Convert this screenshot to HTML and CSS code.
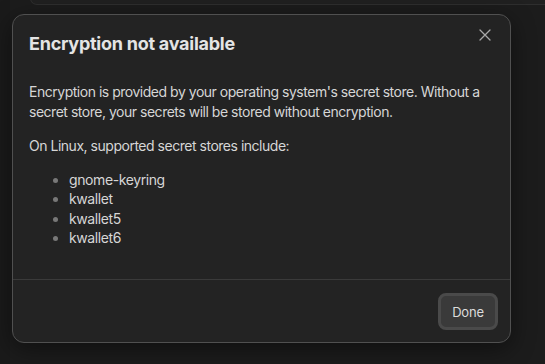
FILE: index.html
```html
<!DOCTYPE html>
<html>
<head>
<meta charset="utf-8">
<link rel="stylesheet" href="styles.css">
</head>
<body>
<div class="app">
  <div class="sidebar"></div>
  <div class="main">
    <div class="panel"></div>
  </div>
</div>
<div class="dialog" role="dialog">
  <button class="close" aria-label="Close">
    <svg width="12" height="12" viewBox="0 0 12 12"><path d="M1 1L11 11M11 1L1 11" stroke="#a9a9a9" stroke-width="1.3" fill="none" stroke-linecap="round"/></svg>
  </button>
  <div class="body">
    <h2 class="title">Encryption not available</h2>
    <p>Encryption is provided by your operating system's secret store. Without a secret store, your secrets will be stored without encryption.</p>
    <p>On Linux, supported secret stores include:</p>
    <ul>
      <li>gnome-keyring</li>
      <li>kwallet</li>
      <li>kwallet5</li>
      <li>kwallet6</li>
    </ul>
  </div>
  <div class="footer">
    <button class="done">Done</button>
  </div>
</div>
</body>
</html>
```
FILE: styles.css
```css
html, body {
  margin: 0;
  height: 100%;
  background: #1c1c1c;
  font-family: Inter, "Noto Sans", sans-serif;
  overflow: hidden;
}
.app {
  display: flex;
  height: 100%;
}
.sidebar {
  width: 10px;
  background: #1a1a1a;
}
.main {
  flex: 1;
  padding-left: 20px;
}
.panel {
  height: 6px;
  margin-top: -2px;
  background: #202020;
  border: 1px solid #2e2e2e;
  border-right: none;
  border-top: none;
  border-bottom-left-radius: 8px;
}
.dialog {
  position: absolute;
  left: 12px;
  top: 14px;
  width: 497px;
  height: 327px;
  background: #232323;
  border: 1px solid #505050;
  border-radius: 12px;
  box-shadow: 0 6px 24px rgba(0,0,0,0.45);
  display: flex;
  flex-direction: column;
  color: #d6d6d6;
}
.close {
  position: absolute;
  right: 18px;
  top: 13px;
  width: 14px;
  height: 14px;
  padding: 0;
  border: none;
  background: none;
  display: flex;
  align-items: center;
  justify-content: center;
}
.body {
  flex: 1;
  padding: 17px 16px 0 16px;
}
.title {
  margin: 0 0 26px 0;
  font-size: 18px;
  line-height: 24px;
  font-weight: 700;
  color: #e4e4e4;
  letter-spacing: -0.25px;
}
.body p {
  margin: 0 0 14.6px 0;
  font-size: 14px;
  line-height: 19.5px;
  letter-spacing: -0.48px;
}
.body ul {
  margin: 0;
  padding-left: 40px;
  font-size: 14px;
  line-height: 19.4px;
  letter-spacing: -0.4px;
}
.body li::marker {
  color: #787878;
  font-size: 14px;
}
.footer {
  height: 62px;
  border-top: 1px solid #3a3a3a;
  display: flex;
  justify-content: flex-end;
  align-items: center;
  padding-right: 12px;
}
.done {
  height: 37px;
  width: 60px;
  margin-top: 1px;
  box-sizing: border-box;
  border: 3px solid #4a4a4a;
  background: #3a3a3a;
  border-radius: 8px;
  color: #dcdcdc;
  font-family: Inter, "Noto Sans", sans-serif;
  font-size: 13px;
  letter-spacing: -0.2px;
  padding: 0;
}
```
